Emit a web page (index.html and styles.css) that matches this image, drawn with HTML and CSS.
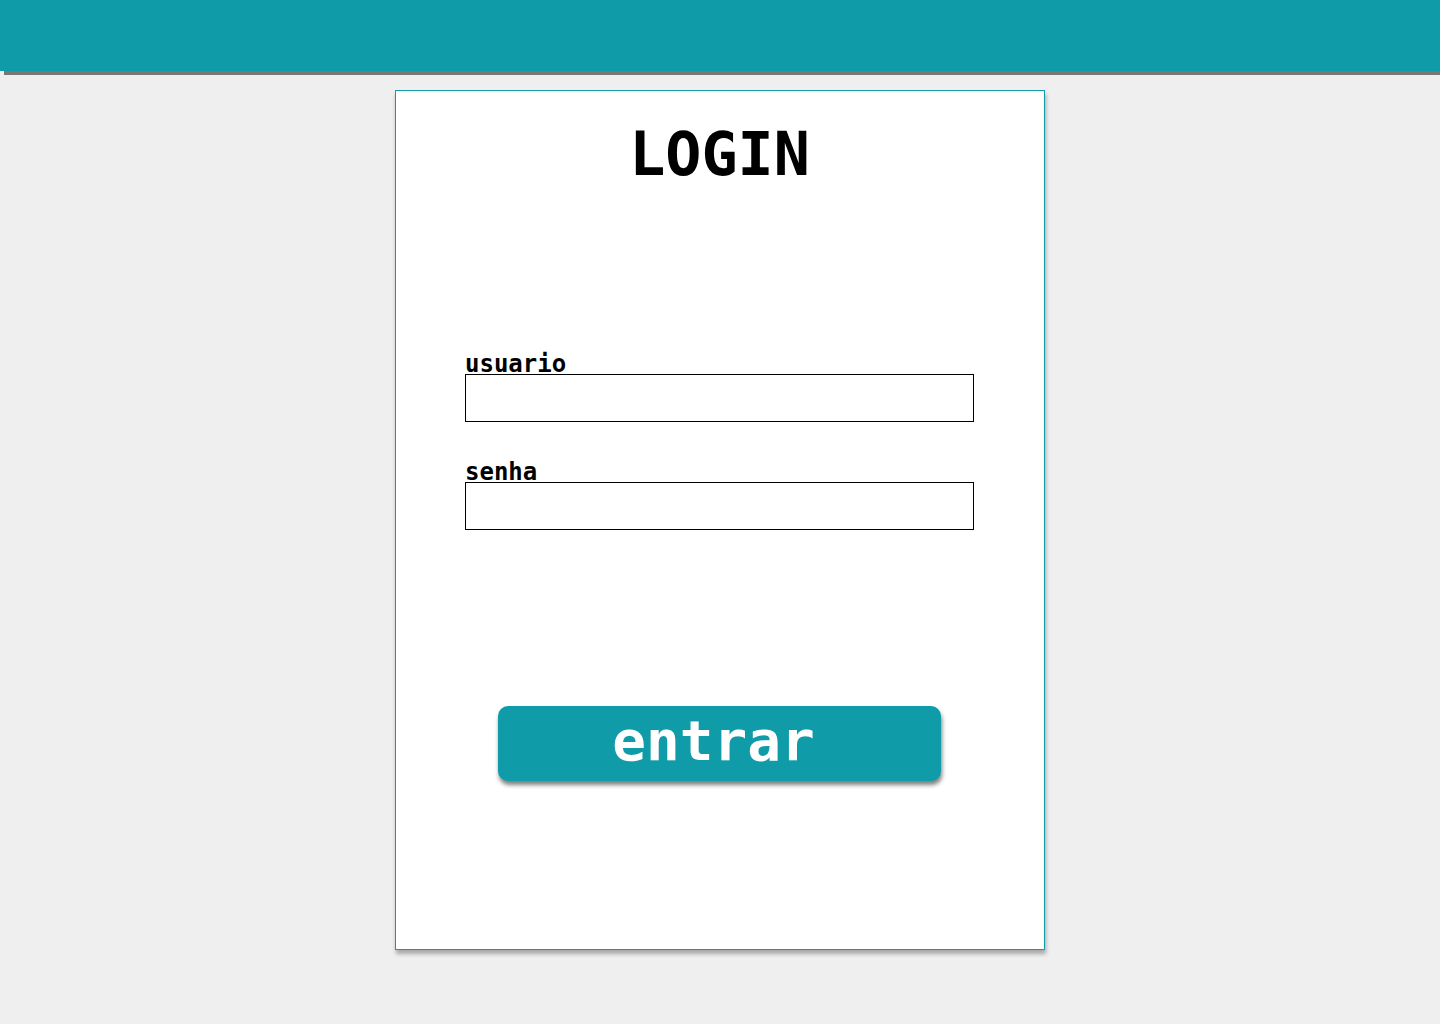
FILE: index.html
```html
<!DOCTYPE html>
<html lang="pt-BR">
<head>
  <meta charset="utf-8">
  <meta name="viewport" content="width=device-width, initial-scale=1">
  <title>Login</title>
  <link rel="stylesheet" href="styles.css">
</head>
<body>
  <header class="topbar"></header>
  <main class="page">
    <form class="card">
      <h1 class="title">LOGIN</h1>
      <div class="fields">
        <div class="field">
          <label class="label" for="usuario">usuario</label>
          <input class="input" id="usuario" name="usuario" type="text" autocomplete="username">
        </div>
        <div class="field">
          <label class="label" for="senha">senha</label>
          <input class="input" id="senha" name="senha" type="password" autocomplete="current-password">
        </div>
      </div>
      <button class="submit" type="submit">entrar</button>
    </form>
  </main>
</body>
</html>
```
FILE: styles.css
```css
* {
  box-sizing: border-box;
}

body {
  margin: 0;
  background: #efefef;
  color: #000;
  font-family: "DejaVu Sans Mono", monospace;
  font-weight: 700;
}

.topbar {
  height: 71px;
  background: #0f9ba8;
  box-shadow: 4px 4px 0 #777;
}

.page {
  display: flex;
  justify-content: center;
  padding: 19px 16px 64px;
}

.card {
  display: flex;
  flex-direction: column;
  width: 100%;
  max-width: 650px;
  padding: 31px 70px 168px 69px;
  background: #fff;
  border: 1px solid #0f9ba8;
  box-shadow: 1px 4px 4px rgba(0, 0, 0, 0.3);
}

.title {
  margin: 0 0 168px;
  font-size: 60px;
  line-height: 64px;
  text-align: center;
}

.fields {
  display: flex;
  flex-direction: column;
  gap: 40px;
  margin-bottom: 176px;
}

.field {
  display: flex;
  flex-direction: column;
}

.label {
  font-size: 24px;
  line-height: 20px;
}

.input {
  width: 100%;
  height: 48px;
  padding: 0 12px;
  background: #fff;
  border: 1px solid #000;
  border-radius: 0;
  font: inherit;
  font-size: 24px;
}

.submit {
  align-self: center;
  width: 100%;
  max-width: 443px;
  height: 75px;
  padding: 0 12px 6px 0;
  background: #0f9ba8;
  border: 0;
  border-radius: 10px;
  box-shadow: 1px 4px 4px rgba(0, 0, 0, 0.5);
  color: #fff;
  font: inherit;
  font-size: 56px;
  line-height: 64px;
  cursor: pointer;
}
```
